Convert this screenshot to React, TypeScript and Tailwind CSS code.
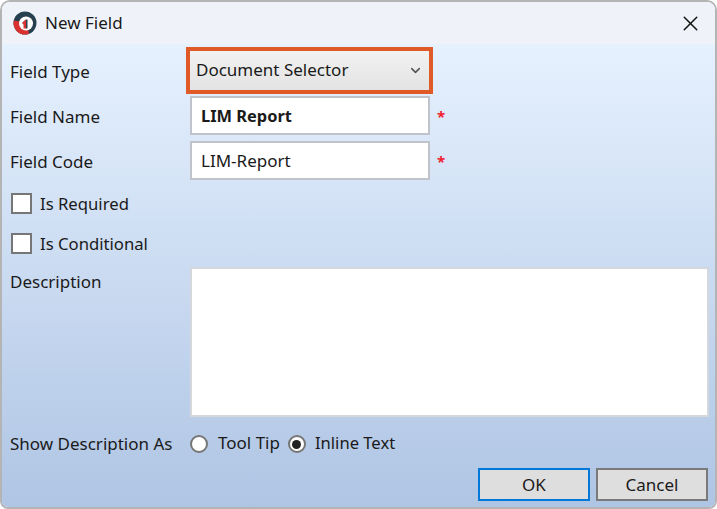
import { X, ChevronDown } from "lucide-react";

// Field label on the left column
function Label({ children }: { children: React.ReactNode }) {
  return <div className="w-[180px] shrink-0 text-[#1a1a1a]">{children}</div>;
}

function Check({ label, className }: { label: string; className: string }) {
  return (
    <div className={`flex items-center h-[21px] ${className}`}>
      <div className="w-[21px] h-[21px] bg-white border-2 border-[#767676]" />
      <span className="ml-[8px] text-[#1a1a1a] text-[16.7px]">{label}</span>
    </div>
  );
}

function Radio({ checked, label, textClass }: { checked?: boolean; label: string; textClass: string }) {
  return (
    <div className="flex items-center mr-[8px]">
      <div className="w-[18px] h-[18px] rounded-full bg-white border-2 border-[#767676] flex items-center justify-center">
        {checked && <div className="w-[9px] h-[9px] rounded-full bg-[#222222]" />}
      </div>
      <span className={`text-[#1a1a1a] -translate-y-px ${textClass}`}>{label}</span>
    </div>
  );
}

function Required() {
  return <span className="ml-[7px] text-[15px] font-bold text-[#f0202e]">*</span>;
}

function Logo() {
  return (
    <svg width="24" height="24" viewBox="0 0 24 24">
      <circle cx="12" cy="12" r="11.5" fill="#27404f" />
      <path d="M.5 12A11.5 11.5 0 0 0 12 23.5c1.500 0 3-.3 4-.8L14 12z" fill="#d8312f" />
      <path d="M.5 12c0-1 .2-2 .5-2.500L10 11v1z" fill="#d8312f" />
      <circle cx="13" cy="12.500" r="7" fill="#ffffff" />
      <path d="M9.500 11.500 13 8.500h1.500v9H13z" fill="#27404f" />
      <path d="M9.500 11.500 13 8.500v9h-2.500v-5l-1 .5z" fill="#d8312f" />
    </svg>
  );
}

export default function App() {
  return (
    <div className="w-[717px] h-[509px] bg-white font-['Noto_Sans','Open_Sans',sans-serif] text-[17px] leading-[24px]">
      <div className="h-full border-2 border-[#b4b4b4] rounded-t-[10px] rounded-b-[8px] overflow-hidden flex flex-col">
        {/* Title bar */}
        <div className="h-[42px] shrink-0 bg-[#eff3f9] flex items-center pl-[11px] pr-[10px]">
          <Logo />
          <span className="ml-[8px] text-[#1a1a1a]">New Field</span>
          <X size={25} strokeWidth={1.4} className="ml-auto mr-[2px] text-[#111111]" />
        </div>

        {/* Form */}
        <div className="flex-1 flex flex-col pl-[8px] pr-[7px] bg-gradient-to-b from-[#e6f1fe] to-[#afc5e4]">
          <div className="flex items-center mt-[3px]">
            <Label><div className="translate-y-px">Field Type</div></Label>
            <div className="-ml-[4px] w-[247px] h-[47px] border-4 border-[#e05a27] bg-gradient-to-b from-[#f2f2f2] to-[#e3e3e3] flex items-center pl-[6px] pr-[6px]">
              <span className="text-[#1a1a1a] -translate-y-px">Document Selector</span>
              <ChevronDown size={15} strokeWidth={2.5} className="ml-auto text-[#555555]" />
            </div>
          </div>

          <div className="flex items-center mt-[2px]">
            <Label><div className="translate-y-px">Field Name</div></Label>
            <div className="w-[240px] h-[39px] bg-white border-2 border-[#c0c4ca] flex items-center pl-[9px] font-bold text-[#1a1a1a] text-[16.4px]">
              LIM Report
            </div>
            <Required />
          </div>

          <div className="flex items-center mt-[6px]">
            <Label><div className="translate-y-px">Field Code</div></Label>
            <div className="w-[240px] h-[39px] bg-white border-2 border-[#c0c4ca] flex items-center pl-[9px] text-[#1a1a1a]">
              LIM-Report
            </div>
            <Required />
          </div>

          <Check label="Is Required" className="mt-[13px] ml-[1px]" />
          <Check label="Is Conditional" className="mt-[19px] ml-[1px]" />

          <div className="flex mt-[13px]">
            <Label>
              <div className="mt-[3px]">Description</div>
            </Label>
            <div className="flex-1 -mr-px h-[150px] bg-white border-2 border-[#d4d8dd]" />
          </div>

          <div className="flex items-center mt-[15px]">
            <Label>Show Description As</Label>
            <Radio label="Tool Tip" textClass="ml-[10px]" />
            <Radio checked label="Inline Text" textClass="ml-[9px] text-[16.6px]" />
          </div>

          <div className="flex justify-end gap-[6px] mt-[12px]">
            <div className="w-[112px] h-[33px] bg-[#dedede] border-2 border-[#0078d7] flex items-center justify-center text-[#1a1a1a]">OK</div>
            <div className="w-[112px] h-[33px] bg-[#dedede] border-2 border-[#7a7a7a] flex items-center justify-center text-[#1a1a1a]">Cancel</div>
          </div>
        </div>
      </div>
    </div>
  );
}
